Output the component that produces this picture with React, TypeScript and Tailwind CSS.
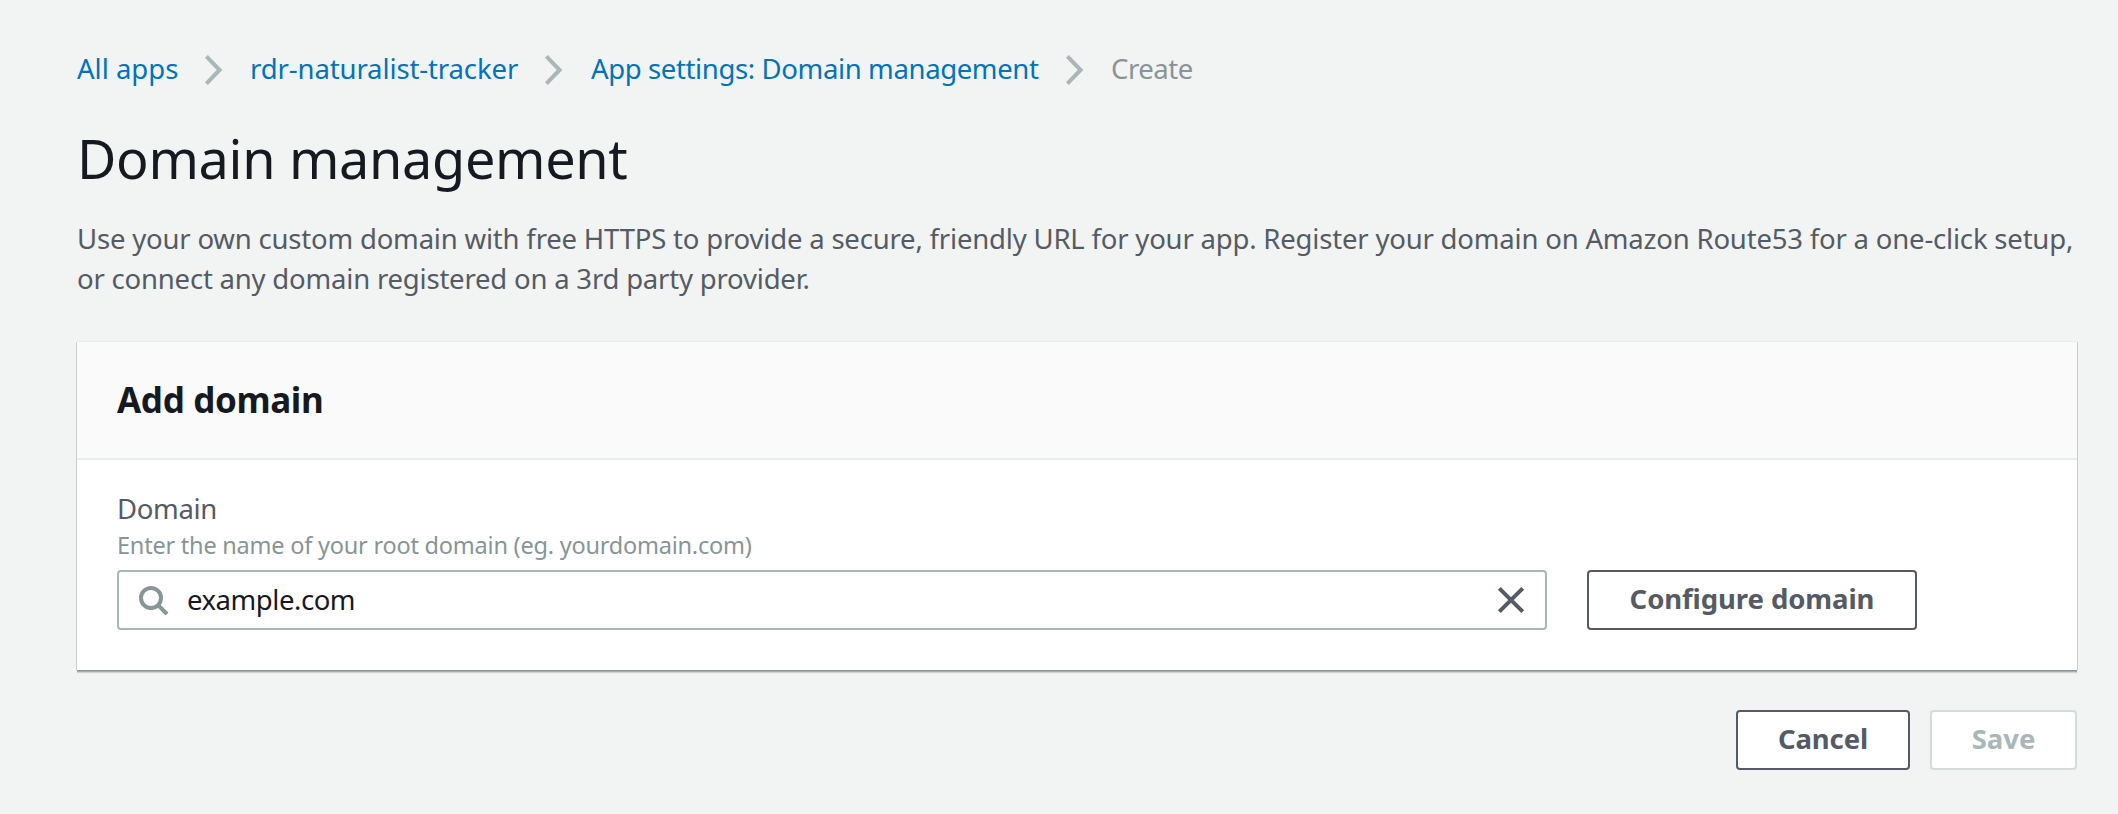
import React from "react";

function Separator() {
  return (
    <svg viewBox="0 0 20 32" className="h-8 w-5 shrink-0" fill="none" stroke="#aab7b8" strokeWidth="4">
      <path d="M2.4 2.4 L15.6 16 L2.4 29.6" />
    </svg>
  );
}

function Breadcrumbs() {
  return (
    <nav className="flex h-10 items-center text-[27.5px] leading-10 whitespace-nowrap text-[#0073bb]">
      <a className="-mt-0.5 w-[127px]">All apps</a>
      <Separator />
      <a className="-mt-0.5 ml-[26px] w-[294px] tracking-[-0.11px]">rdr-naturalist-tracker</a>
      <Separator />
      <a className="-mt-0.5 ml-[27px] w-[474px] tracking-[-0.37px]">App settings: Domain management</a>
      <Separator />
      <span className="-mt-0.5 ml-[26px] tracking-[-0.48px] text-[#879596]">Create</span>
    </nav>
  );
}

function AddDomainCard() {
  return (
    <section className="mt-[43px] h-[328px] bg-white shadow-[0_1px_0_0_#879596,0_2px_0_0_#a3afb0,0_3px_1px_0_rgba(0,28,36,0.15),1px_0_0_0_#ccd2d3,-1px_0_0_0_#ccd2d3,0_-1px_0_0_#eaeded]">
      <header className="h-[118px] border-b-2 border-[#eaeded] bg-[#fafafa] pt-9 pl-10">
        <h2 className="text-[35px] leading-[44px] font-bold tracking-[-0.35px] text-[#16191f]">Add domain</h2>
      </header>
      <div className="px-10 pt-[29px]">
        <label className="block text-[27.5px] leading-10 tracking-[-0.34px] text-[#545b64]">Domain</label>
        <p className="text-[23.5px] leading-8 tracking-[-0.22px] text-[#879596]">
          Enter the name of your root domain (eg. yourdomain.com)
        </p>
        <div className="mt-[9px] flex gap-10">
          <div className="flex h-[60px] w-[1430px] items-center rounded-[4px] border-2 border-[#aab7b8] bg-white pr-[18px] pl-4">
            <svg viewBox="0 0 36 36" className="size-9 shrink-0" fill="none" stroke="#879596" strokeWidth="4">
              <circle cx="16" cy="16" r="10" />
              <path d="M22.8 22.8 L32 32" />
            </svg>
            <span className="ml-[16px] grow text-[27.5px] leading-10 tracking-[-0.45px] text-[#16191f]">
              example.com
            </span>
            <svg viewBox="0 0 32 32" className="size-8 shrink-0" fill="none" stroke="#545b64" strokeWidth="4">
              <path d="M4.3 4.3 L27.7 27.7 M27.7 4.3 L4.3 27.7" />
            </svg>
          </div>
          <button className="h-[60px] w-[330px] rounded-[4px] border-2 border-[#545b64] bg-white pb-0.5 text-[27.5px] leading-10 font-bold tracking-[-0.08px] text-[#545b64]">
            Configure domain
          </button>
        </div>
      </div>
    </section>
  );
}

export default function App() {
  return (
    <main className="h-[814px] w-[2118px] overflow-hidden bg-[#f2f3f3] pt-[50px] pr-[41px] pl-[77px] font-['Noto_Sans',sans-serif]">
      <Breadcrumbs />
      <h1 className="mt-8 text-[54px] leading-[72px] tracking-[-0.33px] text-[#16191f]">Domain management</h1>
      <p className="mt-[25px] text-[27.5px] leading-10 whitespace-nowrap text-[#545b64]">
        <span className="tracking-[-0.19px]">
          Use your own custom domain with free HTTPS to provide a secure, friendly URL for your app. Register your domain on Amazon Route53 for a one-click setup,
        </span>
        <br />
        <span className="tracking-[-0.2px]">or connect any domain registered on a 3rd party provider.</span>
      </p>
      <AddDomainCard />
      <footer className="mt-10 flex justify-end gap-5">
        <button className="h-[60px] w-[174px] rounded-[4px] border-2 border-[#545b64] bg-white pb-0.5 text-[27.5px] leading-10 font-bold tracking-[-0.1px] text-[#545b64]">
          Cancel
        </button>
        <button className="h-[60px] w-[147px] rounded-[4px] border-2 border-[#d5dbdb] bg-white pb-0.5 text-[27.5px] leading-10 font-bold text-[#aab7b8]" disabled>
          Save
        </button>
      </footer>
    </main>
  );
}
